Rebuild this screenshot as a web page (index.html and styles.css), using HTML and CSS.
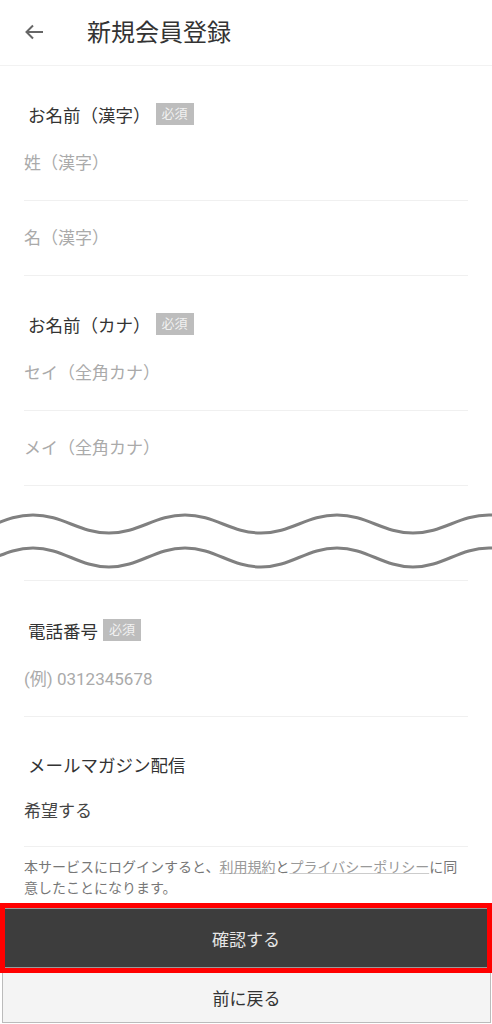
FILE: index.html
```html
<!DOCTYPE html>
<html lang="ja">
<head>
    <meta charset="UTF-8">
    <meta name="viewport" content="width=device-width, initial-scale=1.0">
    <title>新規会員登録</title>
    <link rel="stylesheet" href="styles.css">
</head>
<body>
    <div class="header">
        <svg class="back-icon" width="20" height="16" viewBox="0 0 20 16">
            <path d="M19 8H2.5M9 1.5L2.5 8L9 14.5" fill="none" stroke="#666" stroke-width="2"/>
        </svg>
        <h1>新規会員登録</h1>
    </div>

    <div class="form">
        <div class="section">
            <div class="label">お名前（漢字）<span class="badge">必須</span></div>
            <div class="field placeholder">姓（漢字）</div>
            <div class="field placeholder">名（漢字）</div>
        </div>

        <div class="section">
            <div class="label">お名前（カナ）<span class="badge">必須</span></div>
            <div class="field placeholder">セイ（全角カナ）</div>
            <div class="field placeholder">メイ（全角カナ）</div>
        </div>

        <!-- omitted part of the form -->
        <div class="cut">
            <svg class="wave" width="492" height="94" viewBox="0 0 492 94">
                <path d="M-119 29C-89 29 -73 47 -43 47S3 29 33 29S79 47 109 47S155 29 185 29S231 47 261 47S307 29 337 29S383 47 413 47S459 29 489 29S535 47 565 47" fill="none" stroke="#808080" stroke-width="3"/>
                <path d="M-119 62C-89 62 -73 81 -43 81S3 62 33 62S79 81 109 81S155 62 185 62S231 81 261 81S307 62 337 62S383 81 413 81S459 62 489 62S535 81 565 81" fill="none" stroke="#808080" stroke-width="3"/>
            </svg>
        </div>

        <div class="section section-wide">
            <div class="label">電話番号<span class="badge">必須</span></div>
            <div class="field placeholder">(例) 0312345678</div>
        </div>

        <div class="section section-mail">
            <div class="label">メールマガジン配信</div>
            <div class="field field-value">希望する</div>
        </div>

        <p class="notice">本サービスにログインすると、<a href="#">利用規約</a>と<a href="#">プライバシーポリシー</a>に同<br><span>意したことになります。</span></p>
    </div>

    <div class="highlight">
        <button class="btn btn-confirm">確認する</button>
    </div>
    <button class="btn btn-back">前に戻る</button>
</body>
</html>
```

FILE: styles.css
```css
* {
    box-sizing: border-box;
}
body {
    margin: 0;
    background: #fff;
    color: #333;
    font-family: Roboto, "Noto Sans CJK JP", sans-serif;
}
.header {
    display: flex;
    align-items: center;
    height: 66px;
    padding-left: 24px;
    border-bottom: 1px solid #f2f2f2;
}
.back-icon {
    display: block;
    margin-top: -1px;
}
.header h1 {
    margin: 0 0 0 43px;
    font-size: 24px;
    font-weight: normal;
    color: #333;
    line-height: 1;
}
.form {
    padding: 0 24px;
}
.section {
    padding-top: 36px;
}
.section-wide {
    padding-top: 37px;
}
.section-mail {
    padding-top: 35px;
}
.label {
    display: flex;
    align-items: center;
    height: 24px;
    padding-left: 4px;
    font-size: 17.5px;
    color: #333;
}
.badge {
    display: inline-block;
    margin-left: 5px;
    padding: 0 6px;
    height: 22px;
    line-height: 22px;
    background: #bdbdbd;
    color: #f2f2f2;
    font-size: 13px;
}
.field {
    padding: 25px 0;
    line-height: 24px;
    font-size: 17px;
    border-bottom: 1px solid #f0f0f0;
}
.placeholder {
    color: #aaa;
}
.field-value {
    padding: 23px 0;
    color: #444;
}

/* wavy cut mark */
.cut {
    height: 95px;
    border-bottom: 1px solid #f0f0f0;
}
.wave {
    display: block;
    margin-left: -24px;
}

.notice {
    margin: 0;
    padding: 9px 0 5px;
    font-family: "Noto Sans CJK JP", sans-serif;
    font-size: 14px;
    line-height: 21px;
    color: #777;
}
.notice a {
    color: #999;
    text-decoration: underline;
    text-decoration-color: #ccc;
}

.highlight {
    border: 5px solid #ff0000;
}
.btn {
    display: block;
    width: 100%;
    margin: 0;
    font-family: Roboto, "Noto Sans CJK JP", sans-serif;
    font-size: 17px;
    cursor: pointer;
}
.btn-confirm {
    height: 60px;
    border: none;
    border-top: 1px solid #999;
    border-bottom: 1px solid #999;
    background: #3d3d3d;
    color: #e6e6e6;
}
.btn-back {
    width: calc(100% - 3px);
    margin: 0 1px 0 2px;
    height: 50px;
    border: 1px solid #bbb;
    border-top: none;
    background: #f4f4f4;
    color: #333;
}
```
